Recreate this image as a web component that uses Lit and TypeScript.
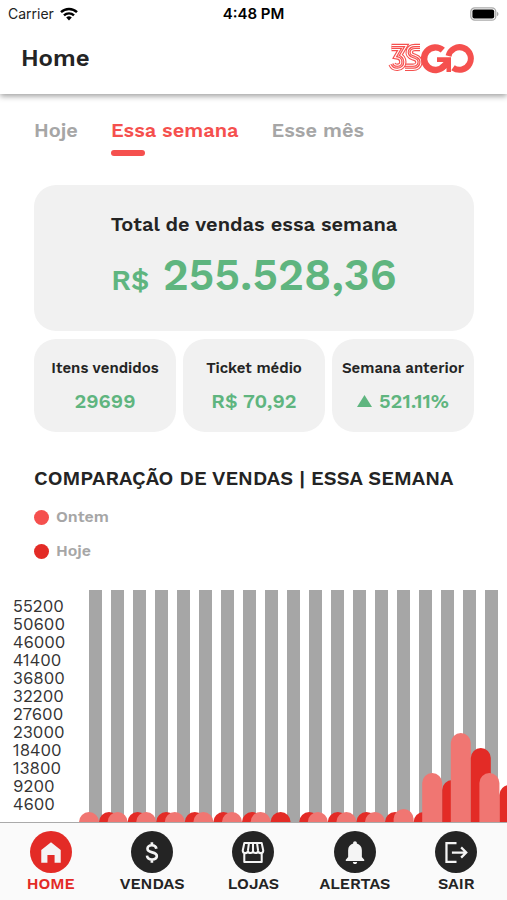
import { LitElement, html, svg, css } from "lit";
import { customElement, state } from "lit/decorators.js";
import { classMap } from "lit/directives/class-map.js";

const TABS = ["Hoje", "Essa semana", "Esse mês"];

const SCALE = [55200, 50600, 46000, 41400, 36800, 32200, 27600, 23000, 18400, 13800, 9200, 4600];

/* Bar heights per period: [ontem, hoje] */
const BARS: [number, number][] = [
  [48, 48], [48, 48], [48, 48], [48, 48], [48, 48], [48, 48], [48, 48], [0, 48],
  [48, 48], [48, 48], [48, 48], [51, 48], [87, 80], [127, 112], [87, 75],
];

const CHART_HEIGHT = 270;
const BAR_WIDTH = 20;
const GROUP_PITCH = 28.6;
const STRIPES = 19;

const NAV = [
  {
    label: "HOME",
    icon: svg`<path fill="#f4f4f4" d="M20.500 11 11 18.500V31h6v-7.500h7V31h6V18.500z"/>`,
  },
  {
    label: "VENDAS",
    icon: svg`<path fill="none" stroke="#f4f4f4" stroke-width="2.600" d="M24.800 17.300c-.4-2.200-1.900-3.400-4.400-3.400-2.600 0-4.300 1.300-4.300 3.400 0 4.900 9.100 2.200 9.100 7.100 0 2.100-1.900 3.400-4.700 3.400-2.800 0-4.600-1.300-4.900-3.700M20.400 11v3M20.400 27.700v3.200"/>`,
  },
  {
    label: "LOJAS",
    icon: svg`<path fill="none" stroke="#f4f4f4" stroke-width="2" stroke-linejoin="round" d="M12 11.800h17l1.500 7.200c0 3.400-4.500 3.400-5 .5-.5 2.700-4.800 2.700-5 0-.2 2.700-4.500 2.700-5 0-.5 2.900-5 2.900-5-.5zM12 22v8.300h17V22M16.500 12l-1 7.500M20.500 12v7.500M24.500 12l1 7.500"/>`,
  },
  {
    label: "ALERTAS",
    icon: svg`<path fill="#f4f4f4" d="M20.500 10c-1.100 0-1.800.8-1.800 1.700v.5c-3.100.8-4.900 3.300-4.900 6.500v6.800L11.500 28v1.400h18V28l-2.300-2.500v-6.800c0-3.200-1.800-5.700-4.900-6.500v-.5c0-.9-.7-1.700-1.800-1.700zM18.400 30.200h4.200c0 1.300-.9 2.100-2.100 2.100s-2.100-.8-2.100-2.100z"/>`,
  },
  {
    label: "SAIR",
    icon: svg`<path fill="none" stroke="#f4f4f4" stroke-width="2.200" d="M21 11.800H11.200v18.400H21M16.500 21h13.500M25.500 16l5 5-5 5"/>`,
  },
];

const THREE = "M6.500 8.500H18L13 17c6.300 1 6.800 11-.6 11.300-2.800.1-4.600-1.300-5.400-3.300";
const ESS = "M35 8.500h-5c-6.600 0-8 7.200-2 9.200l2 .7c6.200 2 4.800 9.900-2 9.900h-8";

@customElement("app-root")
export class AppRoot extends LitElement {
  @state() private tab = 1;

  static styles = css`
    :host {
      display: flex;
      flex-direction: column;
      height: 100vh;
      background: #fff;
      color: #242424;
      font-family: "Work Sans", Inter, "Liberation Sans", sans-serif;
      font-weight: 600;
    }
    * { box-sizing: border-box; }
    svg { display: block; }
    h1, h2, h3, p, ul, ol { margin: 0; padding: 0; list-style: none; font-weight: inherit; }

    .top { position: relative; box-shadow: 0 2px 6px rgba(0, 0, 0, 0.4); }
    .status {
      display: grid;
      grid-template-columns: 1fr auto 1fr;
      align-items: center;
      height: 28px;
      padding: 0 8px;
      color: #000;
      font: 600 14px/28px Inter, sans-serif;
    }
    .time { font-size: 15px; }
    .carrier { display: flex; align-items: center; gap: 6px; font-weight: 400; color: #222; }
    .battery { justify-self: end; }
    .header {
      display: flex;
      align-items: center;
      justify-content: space-between;
      height: 66px;
      padding: 0 32px 6px 21px;
    }
    .title { font-size: 24px; line-height: 28px; }

    .main { flex: 1; min-height: 0; overflow: hidden auto; scrollbar-width: none; }
    .tabs { display: flex; gap: 33px; padding: 24px 34px 0; }
    .tab {
      display: flex;
      flex-direction: column;
      gap: 8px;
      padding: 0;
      border: 0;
      background: none;
      color: #a6a6a6;
      font: inherit;
      font-size: 20px;
      line-height: 24px;
      cursor: pointer;
    }
    .tab::after { content: ""; width: 34px; height: 6px; border-radius: 3px; }
    .tab.active { color: #f5504e; }
    .tab.active::after { background: #f5504e; }

    .cards { display: grid; grid-template-columns: repeat(3, 1fr); gap: 8px 7px; padding: 29px 33px 0 34px; }
    .card { border-radius: 22px; background: #f1f1f1; text-align: center; }
    .total { grid-column: 1 / -1; height: 146px; padding-top: 26px; }
    .total .name { font-size: 20px; line-height: 26px; }
    .total .value { font-size: 44px; line-height: 52px; padding-top: 12px; }
    .total .currency { font-size: 29px; }
    .small { height: 93px; padding-top: 19px; }
    .small .name { font-size: 15px; line-height: 20px; white-space: nowrap; }
    .small .value {
      display: flex;
      align-items: center;
      justify-content: center;
      gap: 7px;
      padding-top: 11px;
      font-size: 20px;
      line-height: 24px;
    }
    .value { color: #5fb57f; }

    .section { padding: 34px 34px 0; font-size: 20px; line-height: 24px; white-space: nowrap; }
    .legend { display: grid; gap: 14px; padding: 17px 34px 0; }
    .key { display: flex; align-items: center; gap: 7px; color: #a6a6a6; font-size: 16px; line-height: 20px; }
    .dot { width: 15px; height: 15px; border-radius: 50%; }
    .dot.before { background: #f5504e; }
    .dot.now { background: #e32b26; }

    .chart { display: flex; padding: 29px 0 0 13px; }
    .scale { flex: none; width: 66px; padding-top: 7px; font-size: 17px; line-height: 18px; }
    .scale li { font-weight: 400; color: #333; }
    .plot { flex: 1; min-width: 0; overflow: hidden; }
    .plot svg { overflow: visible; }
    .stripe { fill: #a6a6a6; }
    .bar.before { fill: #f07672; }
    .bar.now { fill: #e32b26; }

    .nav {
      display: grid;
      grid-template-columns: repeat(5, 1fr);
      height: 78px;
      padding-top: 8px;
      border-top: 1px solid #aaa;
      background: #fafafa;
    }
    .item {
      display: flex;
      flex-direction: column;
      align-items: center;
      gap: 1px;
      color: #242424;
      font-size: 16px;
      line-height: 20px;
      text-decoration: none;
    }
    .disc { width: 42px; height: 42px; border-radius: 50%; background: #242424; }
    .item.active { color: #e32b26; }
    .item.active .disc { background: #e32b26; }
  `;

  private bar(i: number, side: number) {
    const height = BARS[i][side];
    if (!height) return null;
    return svg`<rect class="bar ${side ? "now" : "before"}" x=${i * GROUP_PITCH + side * BAR_WIDTH}
      y=${CHART_HEIGHT - height} width=${BAR_WIDTH} height=${height} rx="10" />`;
  }

  private logo() {
    return html`<svg width="90" height="38" viewBox="0 0 90 38" fill="none" role="img" aria-label="3SGO">
      ${[ESS, THREE].map(
        (d) => svg`<path d=${d} stroke="#f5504e" stroke-width="7.400"/>
          <path d=${d} stroke="#fff" stroke-width="5.200"/>
          <path d=${d} stroke="#f5504e" stroke-width="3"/>
          <path d=${d} stroke="#fbb" stroke-width="1"/>`
      )}
      <path d="M57.800 11.200A11.300 11.300 0 1 0 59 27" stroke="#f5504e" stroke-width="6.400"/>
      <path d="M52 18.300h14V33h-4.500v-4L58 31.500 54.500 27l4-4H52z" fill="#f5504e"/>
      <path d="M63.500 17A11.300 11.300 0 1 1 68 28.700" stroke="#f5504e" stroke-width="6"/>
    </svg>`;
  }

  render() {
    return html`
      <header class="top">
        <div class="status">
          <span class="carrier">Carrier
            <svg width="18" height="14" viewBox="0 0 18 14" fill="none" stroke="#000" stroke-width="2.400">
              <path d="M1 5.200a11.500 11.500 0 0 1 16 0M4 8.400a7.200 7.200 0 0 1 10 0"/>
              <path d="M9 13.500 6.200 10.600a4 4 0 0 1 5.600 0z" fill="#000" stroke="none"/>
            </svg>
          </span>
          <span class="time">4:48 PM</span>
          <svg class="battery" width="29" height="14" viewBox="0 0 29 14">
            <rect x=".8" y=".8" width="25" height="12.400" rx="4" fill="#fff" stroke="#aaa" stroke-width="1.300"/>
            <rect x="2.400" y="2.400" width="21.800" height="9.200" rx="2" fill="#000"/>
            <path d="M27 4.800c2 .8 2 3.600 0 4.400z" fill="#aaa"/>
          </svg>
        </div>
        <div class="header">
          <h1 class="title">Home</h1>
          ${this.logo()}
        </div>
      </header>

      <main class="main">
        <div class="tabs">
          ${TABS.map(
            (name, i) => html`<button class=${classMap({ tab: true, active: i === this.tab })}
              @click=${() => (this.tab = i)}>${name}</button>`
          )}
        </div>

        <section class="cards">
          <div class="card total">
            <h2 class="name">Total de vendas essa semana</h2>
            <p class="value"><span class="currency">R$</span> 255.528,36</p>
          </div>
          <div class="card small">
            <h3 class="name">Itens vendidos</h3>
            <p class="value">29699</p>
          </div>
          <div class="card small">
            <h3 class="name">Ticket médio</h3>
            <p class="value">R$ 70,92</p>
          </div>
          <div class="card small">
            <h3 class="name">Semana anterior</h3>
            <p class="value">
              <svg width="15" height="12" viewBox="0 0 15 12"><path d="M7.500 0 15 12H0z" fill="#5fb57f"/></svg>
              521.11%
            </p>
          </div>
        </section>

        <h2 class="section">COMPARAÇÃO DE VENDAS | ESSA SEMANA</h2>
        <ul class="legend">
          <li class="key"><span class="dot before"></span>Ontem</li>
          <li class="key"><span class="dot now"></span>Hoje</li>
        </ul>

        <div class="chart">
          <ol class="scale">${SCALE.map((n) => html`<li>${n}</li>`)}</ol>
          <div class="plot">
            <svg width="450" height=${CHART_HEIGHT}>
              ${Array.from({ length: STRIPES }, (_, i) =>
                svg`<rect class="stripe" x=${10 + i * 22} y="0" width="13" height=${CHART_HEIGHT} />`
              )}
              ${BARS.map((_, i) => [this.bar(i, 0), this.bar(i, 1)])}
            </svg>
          </div>
        </div>
      </main>

      <nav class="nav">
        ${NAV.map(
          (item, i) => html`<a href="#" class=${classMap({ item: true, active: i === 0 })}>
            <span class="disc"><svg width="42" height="42" viewBox="0 0 41 41">${item.icon}</svg></span>
            ${item.label}
          </a>`
        )}
      </nav>
    `;
  }
}
